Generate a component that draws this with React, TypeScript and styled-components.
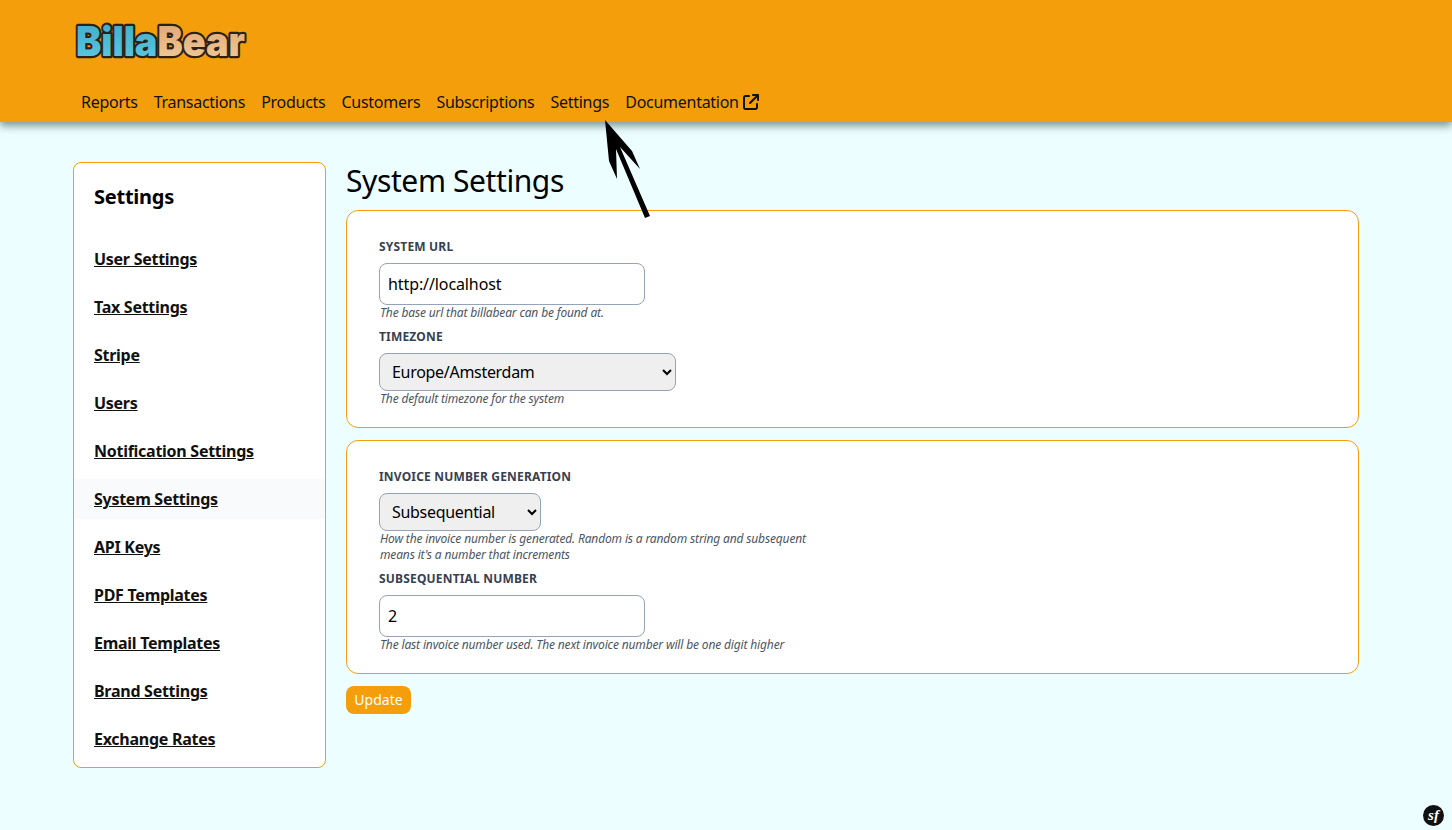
import React from 'react'
import styled, { createGlobalStyle } from 'styled-components'
import { FaArrowUpRightFromSquare } from 'react-icons/fa6'

const AMBER = '#f59e0b'
const FONT = '"Noto Sans", "Open Sans", sans-serif'

const NAV_ITEMS = ['Reports', 'Transactions', 'Products', 'Customers', 'Subscriptions', 'Settings']

const SIDE_ITEMS = [
  'User Settings',
  'Tax Settings',
  'Stripe',
  'Users',
  'Notification Settings',
  'System Settings',
  'API Keys',
  'PDF Templates',
  'Email Templates',
  'Brand Settings',
  'Exchange Rates',
]

const GlobalStyle = createGlobalStyle`
  html, body {
    margin: 0;
    padding: 0;
    background: #ecfeff;
  }
  body {
    font-family: ${FONT};
    color: #000;
    min-height: 830px;
  }
  * {
    box-sizing: border-box;
  }
`

const Page = styled.div`
  position: relative;
  height: 830px;
  overflow: hidden;
`

const Header = styled.header`
  height: 122px;
  background: ${AMBER};
  padding: 10px 0 0 73px;
  box-shadow: 0 4px 8px rgba(40, 60, 70, 0.55);
`

const LogoSvg = styled.svg`
  display: block;
`

const LogoText = styled.text`
  font-family: Inter, 'DejaVu Sans', sans-serif;
  font-weight: 900;
  font-size: 41px;
  stroke: #2b2118;
  stroke-width: 4.5px;
  stroke-linejoin: round;
  paint-order: stroke fill;
`

const Nav = styled.nav`
  display: flex;
  gap: 16px;
  padding: 20px 0 0 8px;
`

const NavItem = styled.a`
  display: flex;
  align-items: center;
  gap: 4px;
  font-size: 16px;
  line-height: 24px;
  letter-spacing: -0.27px;
  color: #111;
`

const Main = styled.main`
  display: flex;
  align-items: flex-start;
  gap: 20px;
  padding: 40px 93px 0 73px;
`

const Sidebar = styled.aside`
  flex: 0 0 253px;
  height: 606px;
  background: #fff;
  border: 1px solid ${AMBER};
  border-radius: 8px;
  padding: 20px 0 0;
`

const SideTitle = styled.h2`
  margin: 0 0 28px;
  padding-left: 20px;
  font-size: 20px;
  line-height: 28px;
  font-weight: 700;
  letter-spacing: -0.25px;
`

const SideItem = styled.a<{ $active?: boolean }>`
  display: block;
  height: 40px;
  margin-bottom: 8px;
  padding: 8px 20px;
  font-size: 16px;
  line-height: 24px;
  font-weight: 700;
  letter-spacing: -0.27px;
  color: #111;
  text-decoration: underline;
  background: ${(p) => (p.$active ? '#f9fafb' : 'transparent')};
`

const Content = styled.section`
  flex: 1;
`

const Title = styled.h1`
  margin: 0 0 11px;
  padding-top: 1px;
  font-size: 30px;
  line-height: 36px;
  font-weight: 400;
  letter-spacing: -0.4px;
`

const Card = styled.div<{ $height: number }>`
  height: ${(p) => p.$height}px;
  margin-bottom: 12px;
  padding: 28px 32px 0;
  background: #fff;
  border: 1px solid ${AMBER};
  border-radius: 12px;
`

const Label = styled.label`
  display: block;
  height: 16px;
  margin-bottom: 8px;
  font-size: 12px;
  line-height: 16px;
  font-weight: 700;
  letter-spacing: 0.18px;
  text-transform: uppercase;
  color: #374151;
`

const TextInput = styled.input`
  display: block;
  width: 266px;
  height: 42px;
  padding: 0 8px;
  font-family: ${FONT};
  font-size: 16px;
  letter-spacing: -0.1px;
  color: #000;
  background: #fff;
  border: 1px solid #94a3b8;
  border-radius: 8px;
`

const Select = styled.select<{ $width: number }>`
  display: block;
  width: ${(p) => p.$width}px;
  height: 38px;
  padding: 0 8px;
  font-family: ${FONT};
  font-size: 16px;
  letter-spacing: -0.3px;
  color: #000;
  background: #efefef;
  border: 1px solid #94a3b8;
  border-radius: 8px;
`

const Hint = styled.p`
  width: 448px;
  margin: 0 0 8px;
  font-size: 12px;
  line-height: 16px;
  font-style: italic;
  letter-spacing: -0.15px;
  color: #4b5563;
  padding-left: 1px;
`

const UpdateButton = styled.button`
  display: block;
  width: 65px;
  height: 28px;
  padding: 0 0 1px;
  font-family: ${FONT};
  font-size: 14px;
  color: #fff;
  background: ${AMBER};
  border: 0;
  border-radius: 8px;
`

const Arrow = styled.svg`
  position: absolute;
  left: 600px;
  top: 115px;
`

const SfBadge = styled.div`
  position: absolute;
  right: 8px;
  bottom: 4px;
  width: 21px;
  height: 21px;
  border-radius: 50%;
  background: #111;
  color: #fff;
  font-family: 'Liberation Serif', serif;
  font-style: italic;
  font-weight: 700;
  font-size: 15px;
  line-height: 20px;
  text-align: center;
`

export default function App() {
  return (
    <Page>
      <GlobalStyle />
      <Header>
        <LogoSvg width="280" height="60" viewBox="0 0 280 60">
          <defs>
            <linearGradient id="billa" x1="0" y1="0" x2="0" y2="1">
              <stop offset="0" stopColor="#3fa9c9" />
              <stop offset="1" stopColor="#5fcbe4" />
            </linearGradient>
            <linearGradient id="bear" x1="0" y1="0" x2="0" y2="1">
              <stop offset="0" stopColor="#dfa26c" />
              <stop offset="1" stopColor="#f0cf9c" />
            </linearGradient>
          </defs>
          <LogoText x="3" y="46" textLength="169" lengthAdjust="spacingAndGlyphs">
            <tspan fill="url(#billa)">Billa</tspan>
            <tspan fill="url(#bear)">Bear</tspan>
          </LogoText>
        </LogoSvg>
        <Nav>
          {NAV_ITEMS.map((item) => (
            <NavItem key={item}>{item}</NavItem>
          ))}
          <NavItem>
            Documentation <FaArrowUpRightFromSquare size={16} />
          </NavItem>
        </Nav>
      </Header>
      <Main>
        <Sidebar>
          <SideTitle>Settings</SideTitle>
          {SIDE_ITEMS.map((item) => (
            <SideItem key={item} $active={item === 'System Settings'}>
              {item}
            </SideItem>
          ))}
        </Sidebar>
        <Content>
          <Title>System Settings</Title>
          <Card $height={218}>
            <Label>System Url</Label>
            <TextInput defaultValue="http://localhost" />
            <Hint>The base url that billabear can be found at.</Hint>
            <Label>Timezone</Label>
            <Select $width={297} defaultValue="Europe/Amsterdam">
              <option>Europe/Amsterdam</option>
            </Select>
            <Hint>The default timezone for the system</Hint>
          </Card>
          <Card $height={234}>
            <Label>Invoice Number Generation</Label>
            <Select $width={162} defaultValue="Subsequential">
              <option>Random</option>
              <option>Subsequential</option>
            </Select>
            <Hint>
              How the invoice number is generated. Random is a random string and subsequent means it's a number that
              increments
            </Hint>
            <Label>Subsequential Number</Label>
            <TextInput defaultValue="2" />
            <Hint>The last invoice number used. The next invoice number will be one digit higher</Hint>
          </Card>
          <UpdateButton>Update</UpdateButton>
        </Content>
      </Main>
      <Arrow width="60" height="110" viewBox="600 115 60 110">
        <polygon points="605,120 632,151 640,169 620,147 650,216 645,218 616,149 617,179 609,161" fill="#000" />
      </Arrow>
      <SfBadge>sf</SfBadge>
    </Page>
  )
}
